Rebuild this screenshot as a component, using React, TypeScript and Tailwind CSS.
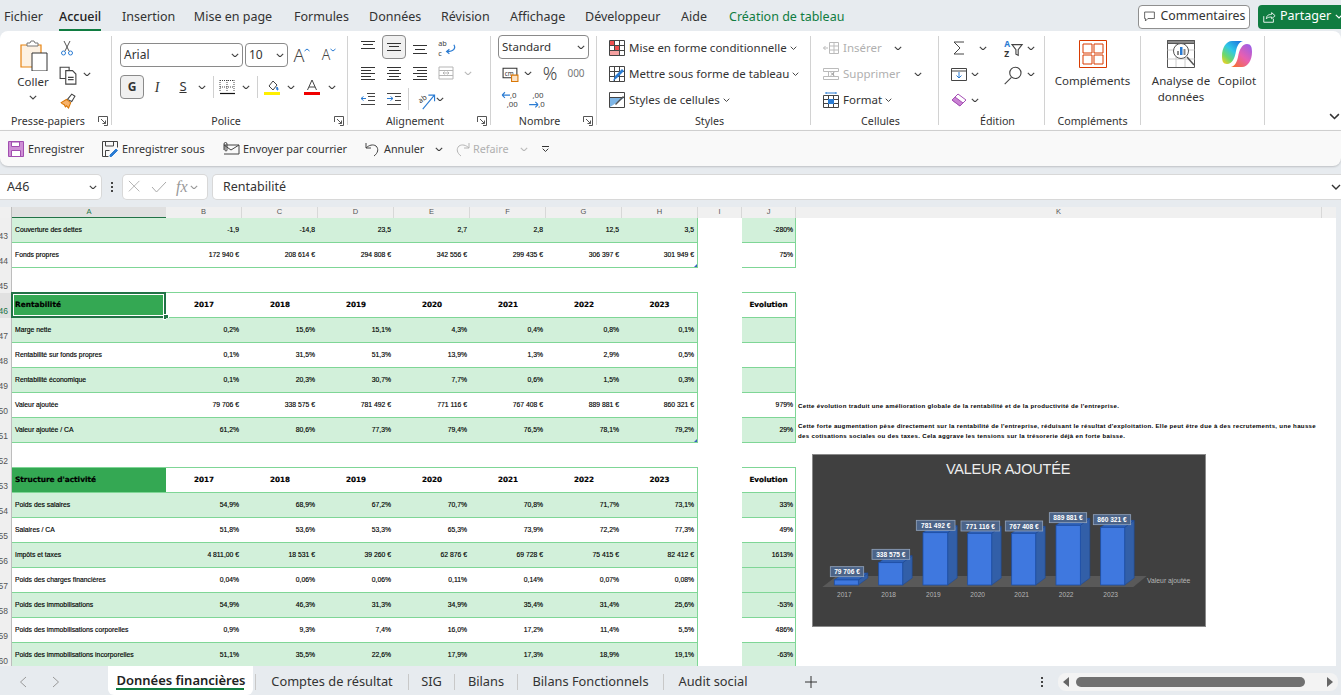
import React from "react";

const gridCols = "grid grid-cols-[12px_154px_76px_76px_76px_76px_76px_76px_76px_44px_54px_526px_14px]";
const ui = "font-['Noto_Sans','Open_Sans',sans-serif]";

const Chev = ({ c = "#444", w = 8 }: { c?: string; w?: number }) => (
  <svg width={w} height={w * 0.6} viewBox="0 0 10 6" className="shrink-0"><path d="M1 1l4 4 4-4" fill="none" stroke={c} strokeWidth="1.4" /></svg>
);
const S = ({ s = 16, children, vb }: { s?: number; children: React.ReactNode; vb?: string }) => (
  <svg width={s} height={s} viewBox={vb ?? "0 0 16 16"} fill="none" stroke="#444" strokeWidth="1" className="shrink-0 overflow-visible">{children}</svg>
);
const Lines = ({ rows, c = "#333" }: { rows: [number, number, number][]; c?: string }) => (
  <S>{rows.map(([y, a, b], i) => <path key={i} d={`M${a} ${y}H${b}`} stroke={c} />)}</S>
);
const Launcher = () => (
  <svg width="10" height="10" viewBox="0 0 10 10" fill="none" stroke="#555" strokeWidth="1" className="shrink-0"><path d="M.5 6V.5H9.5V9.5H6" /><path d="M3 3l4.5 4.5M7.5 4.5v3h-3" /></svg>
);
const Sep = ({ h = "h-[22px]" }: { h?: string }) => <div className={`w-px bg-[#d0d0d0] ${h}`} />;

const Group = ({ cls, label, launcher, children }: { cls: string; label?: string; launcher?: boolean; children: React.ReactNode }) => (
  <div className={`mt-[5px] h-[89px] shrink-0 border-r border-[#d2d2d2] ${cls}`}>
    <div className="flex h-[76px] flex-col">{children}</div>
    <div className="flex h-[18px] items-center text-[10.7px] text-[#333]">
      <span className="flex-1 text-center">{label}</span>
      {launcher && <span className="flex w-[15px] justify-center pr-[2px]"><Launcher /></span>}
    </div>
  </div>
);
const Slot = ({ cls, children }: { cls: string; children?: React.ReactNode }) => (
  <div className={`flex shrink-0 items-center justify-center ${cls}`}>{children}</div>
);
const Row = ({ children, cls = "" }: { children: React.ReactNode; cls?: string }) => (
  <div className={`flex h-[26px] items-center ${cls}`}>{children}</div>
);

const tabs: [string, string][] = [
  ["Fichier", "w-[34px]"], ["Accueil", "w-[42px]"], ["Insertion", "w-[50px]"], ["Mise en page", "w-[80px]"], ["Formules", "w-[54px]"],
  ["Données", "w-[51px]"], ["Révision", "w-[48px]"], ["Affichage", "w-[54px]"], ["Développeur", "w-[74px]"], ["Aide", "w-[28px]"], ["Création de tableau", "w-[115px]"],
];

function TabBar() {
  return (
    <div className="flex h-[31px] shrink-0 items-center pl-[4px] pt-[2px] text-[12.5px] text-[#333]">
      <div className="flex gap-[21px]">
        {tabs.map(([t, w]) => (
          <div key={t} className={`relative whitespace-nowrap leading-[20px] ${w} ${t === "Accueil" ? "text-center font-medium text-[#222]" : "text-center"} ${t.startsWith("Création") ? "text-[#107c41]" : ""}`}>
            {t}
            {t === "Accueil" && <div className="absolute -bottom-[4px] left-0 h-[2px] w-full bg-[#107c41]" />}
          </div>
        ))}
      </div>
      <div className="ml-auto flex items-center">
        <div className="flex h-[24px] w-[112px] items-center justify-center gap-[5px] rounded-[4px] border border-[#8f8f8f] bg-white text-[12.3px]">
          <S s={13}><path d="M2 2.5h12v8H6l-3 3v-3H2z" /></S>Commentaires
        </div>
        <div className="ml-[8px] flex h-[24px] w-[83px] items-center gap-[4px] rounded-l-[4px] bg-[#107c41] pl-[4px] text-[12.5px] text-white">
          <S s={14}><path d="M2 7v7h11v-4M5 10c0-4 3-5 6-5V3l4 3.5L11 10V8c-3 0-5 .5-6 2z" stroke="#fff" /></S>Partager<Chev c="#fff" />
        </div>
      </div>
    </div>
  );
}

function Ribbon() {
  return (
    <div className={`flex h-[99px] shrink-0 rounded-tl-[8px] rounded-tr-[8px] bg-white text-[11.5px] text-[#333] ${ui}`}>
      {/* Presse-papiers */}
      <Group cls="w-[112px]" label="Presse-papiers" launcher>
        <div className="flex">
          <div className="ml-[15px] flex w-[36px] flex-col items-center">
            <svg width="30" height="32" viewBox="0 0 30 32" fill="none" className="mt-[3px]">
              <path d="M3 6h20v22H3z" fill="#fdf1e2" stroke="#e8830f" strokeWidth="1.2" />
              <path d="M9 7V4h3l1-2h3l1 2h3v3z" fill="#fff" stroke="#777" />
              <path d="M14 14h15v18H14z" fill="#fff" stroke="#333" />
            </svg>
            <span className="mt-[3px] text-[11.5px] leading-[16px]">Coller</span>
            <span className="mt-[5px]"><Chev /></span>
          </div>
          <div className="ml-[8px] -mt-[1px] flex flex-col">
            <Row cls="w-[30px]">
              <S s={16}><path d="M5 1l5 10M11 1L6 11" stroke="#555" /><circle cx="4.5" cy="13" r="2" stroke="#2b7cd3" /><circle cx="11.5" cy="13" r="2" stroke="#2b7cd3" /></S>
            </Row>
            <Row cls="w-[40px]">
              <S s={18}><path d="M1 2h8v10H1z" /><path d="M6 5h6l3 3v9H6z" fill="#fff" /><path d="M8 11h5M8 13h5" /></S>
              <span className="ml-[6px]"><Chev /></span>
            </Row>
            <Row cls="w-[30px]">
              <S s={17}><path d="M8 7l4-5 3 2-3 5z" fill="#fff" stroke="#444" /><path d="M2 10l5-3 4 3-2 5-2-2-1 1-1-2-2-1z" fill="#f6b26b" stroke="#d97706" /></S>
            </Row>
          </div>
        </div>
      </Group>

      {/* Police */}
      <Group cls="w-[236px] pl-[8px]" label="Police" launcher>
        <div className="flex flex-col gap-[8px] pt-[7px] text-[12px]">
          <div className="flex h-[24px] items-center">
            <div className="flex h-[24px] w-[123px] items-center justify-between rounded-[4px] border border-[#8a8a8a] pl-[3px] pr-[3px]">Arial<Chev /></div>
            <div className="ml-[2px] flex h-[24px] w-[43px] items-center justify-between rounded-[4px] border border-[#8a8a8a] pl-[3px] pr-[3px]">10<Chev /></div>
            <Slot cls="ml-[1px] w-[26px]">
              <span className="flex items-start text-[18px] font-light leading-[20px] text-[#444]">A<svg width="6" height="4" viewBox="0 0 6 4" className="mt-[3px]"><path d="M.5 3L3 1l2.5 2" fill="none" stroke="#2b7cd3" /></svg></span>
            </Slot>
            <Slot cls="ml-[1px] w-[26px]">
              <span className="flex items-start text-[14px] font-light leading-[18px] text-[#444]">A<svg width="6" height="4" viewBox="0 0 6 4" className="mt-[2px]"><path d="M.5 1L3 3l2.5-2" fill="none" stroke="#2b7cd3" /></svg></span>
            </Slot>
          </div>
          <div className="flex h-[24px] items-center">
            <div className="flex h-[24px] w-[24px] items-center justify-center rounded-[4px] border border-[#8a8a8a] bg-[#f0f0f0] text-[12px] font-bold">G</div>
            <Slot cls="w-[26px] font-['Liberation_Serif',serif] text-[14px] italic">I</Slot>
            <Slot cls="w-[26px] text-[13px] underline">S</Slot>
            <Slot cls="w-[12px]"><Chev /></Slot>
            <div className="ml-[5px]"><Sep /></div>
            <Slot cls="w-[26px]"><S><path d="M1 1.5h14M1 8h14M8 1v12M1 1v12M15 1v12" strokeDasharray="1 1" /><path d="M1 14.5h15" stroke="#111" strokeWidth="1.2" /></S></Slot>
            <Slot cls="w-[12px]"><Chev /></Slot>
            <div className="ml-[5px]"><Sep /></div>
            <Slot cls="w-[28px]"><S><path d="M5 7l4-5 4 4-4 5z" /><path d="M13 8c1 1.5 1.5 3 .5 3s-1-1.5-.5-3z" fill="#2b7cd3" stroke="#2b7cd3" /><path d="M0 14.5h16" stroke="#ffef00" strokeWidth="3" /></S></Slot>
            <Slot cls="w-[10px]"><Chev /></Slot>
            <Slot cls="w-[32px]"><S><path d="M3.5 11L8 1l4.5 10M5 8h6" /><path d="M0 14.5h16" stroke="#f00000" strokeWidth="3" /></S></Slot>
            <Slot cls="w-[8px]"><Chev /></Slot>
          </div>
        </div>
      </Group>

      {/* Alignement */}
      <Group cls="w-[143px] pl-[7px]" label="Alignement" launcher>
        <div className="-mt-[2px]">
          <Row>
            <Slot cls="w-[26px]"><Lines rows={[[2.5, 1, 15], [5.5, 3, 13], [9.5, 1, 15]]} /></Slot>
            <Slot cls="h-[24px] w-[24px] mx-[1px] rounded-[4px] border border-[#8a8a8a] bg-[#f0f0f0]"><Lines rows={[[4.5, 1, 15], [7.5, 3, 13], [11.5, 1, 15]]} /></Slot>
            <Slot cls="w-[26px]"><Lines rows={[[6.5, 1, 15], [10.5, 3, 13], [14.5, 1, 15]]} /></Slot>
            <Slot cls="w-[26px]">
              <S s={18}><text x="1" y="7" fontSize="6.500" fill="#444" stroke="none">ab</text><text x="1" y="16" fontSize="6.500" fill="#444" stroke="none">c</text><path d="M15 6c2 3 0 6-6 6M11 10l-2.500 2 2.500 2" stroke="#2b7cd3" /></S>
            </Slot>
          </Row>
          <Row>
            <Slot cls="w-[26px]"><Lines rows={[[2.5, 1, 15], [5.5, 1, 11], [8.5, 1, 15], [11.5, 1, 11], [14.5, 1, 15]]} /></Slot>
            <Slot cls="w-[26px]"><Lines rows={[[2.5, 1, 15], [5.5, 3, 13], [8.5, 1, 15], [11.5, 3, 13], [14.5, 1, 15]]} /></Slot>
            <Slot cls="w-[26px]"><Lines rows={[[2.5, 1, 15], [5.5, 5, 15], [8.5, 1, 15], [11.5, 5, 15], [14.5, 1, 15]]} /></Slot>
            <Slot cls="w-[26px]"><S><path d="M1 2h14v12H1zM1 5.500h14M1 10.500h14M5 8h6M5 8l1.500-1.500M5 8l1.500 1.500M11 8L9.500 6.500M11 8L9.500 9.500" stroke="#b5b5b5" /></S></Slot>
            <Slot cls="w-[18px]"><Chev c="#bbb" /></Slot>
          </Row>
          <Row>
            <Slot cls="w-[26px]"><S><path d="M7 2.500h8M8 5.500h7M8 9.500h7M1 13.500h14" /><path d="M6 7.500H1M1 7.500l2.500-2M1 7.500l2.500 2" stroke="#2b7cd3" /></S></Slot>
            <Slot cls="w-[26px]"><S><path d="M1 2.500h14M9 5.500h6M9 9.500h6M1 13.500h14" /><path d="M1 7.500h6M7 7.500l-2.500-2M7 7.500l-2.500 2" stroke="#2b7cd3" /></S></Slot>
            <Slot cls="w-[3px]"><Sep /></Slot>
            <Slot cls="w-[29px]"><S s={18}><text x="2" y="10" fontSize="6.500" fill="#444" stroke="none" transform="rotate(-35 6 8)">ab</text><path d="M6 17L16 5M11 4.500h5.500V10" stroke="#2b7cd3" /></S></Slot>
            <Slot cls="w-[2px]"><Chev /></Slot>
          </Row>
        </div>
      </Group>

      {/* Nombre */}
      <Group cls="w-[106px] pl-[7px]" label="Nombre" launcher>
        <div className="-mt-[1px]">
          <div className="flex h-[24px] w-[91px] items-center justify-between rounded-[4px] border border-[#8a8a8a] pl-[3px] pr-[3px]">Standard<Chev /></div>
          <div className="mt-[1px] flex h-[26px] items-center">
            <Slot cls="w-[24px]"><S s={17}><path d="M1 3h13v9H1z" stroke="#333" /><text x="2.500" y="10" fontSize="6" fill="#333" stroke="none">cm</text><path d="M9 9.500h6v6H9z" fill="#fbe3c8" stroke="#d97706" /></S></Slot>
            <Slot cls="w-[12px]"><Chev /></Slot>
            <Slot cls="ml-[2px] w-[28px] text-[18px] font-light leading-[20px] text-[#444]">%</Slot>
            <Slot cls="w-[24px] text-[10px] text-[#777]">000</Slot>
          </div>
          <div className="flex h-[26px] items-center">
            <Slot cls="w-[24px]"><S s={18}><text x="8" y="7" fontSize="7" fill="#444" stroke="none">,0</text><text x="5" y="15" fontSize="7" fill="#444" stroke="none">,00</text><path d="M8 4.500H1M1 4.500l2.500-2.500M1 4.500L3.500 7" stroke="#2b7cd3" /></S></Slot>
            <Slot cls="ml-[3px] w-[24px]"><S s={18}><text x="4" y="7" fontSize="7" fill="#444" stroke="none">,00</text><text x="9" y="15" fontSize="7" fill="#444" stroke="none">,0</text><path d="M1 13h8M9 13l-2.500-2.500M9 13l-2.500 2.500" stroke="#2b7cd3" /></S></Slot>
          </div>
        </div>
      </Group>

      {/* Styles */}
      <Group cls="w-[214px] pl-[12px]" label="Styles">
        <div className="-mt-[1px]">
          {[
            ["Mise en forme conditionnelle", <S key="a"><path d="M.5.500h15v15H.5zM.5 5.500h15M.5 10.500h15M5.500.500v15M10.500.500v15" stroke="#444" /><path d="M1 1h4v4H1zM6 6h4v4H6z" fill="#f05050" stroke="none" /><path d="M1 11h9v4H1z" fill="#f4a0a0" stroke="none" /></S>],
            ["Mettre sous forme de tableau", <S key="b"><path d="M.5.500h15v15H.5zM.5 5.500h15M.5 10.500h15M5.500.500v15M10.500.500v15" stroke="#444" /><path d="M6 10l7-7 2 2-7 7-4 3z" fill="#2b7cd3" stroke="none" /></S>],
            ["Styles de cellules", <S key="c"><path d="M.5.500h15v15H.5zM.5 5.500h15" stroke="#444" /><path d="M1 6h14L1 15z" fill="#7fb6e6" stroke="none" /><path d="M6 12l8-8 1 1-8 8z" fill="#555" stroke="none" /></S>],
          ].map(([t, ic]) => (
            <Row key={t as string}>
              {ic}<span className="ml-[4px] whitespace-nowrap">{t}</span><span className="ml-[3px]"><Chev w={7} /></span>
            </Row>
          ))}
        </div>
      </Group>

      {/* Cellules */}
      <Group cls="w-[128px] pl-[12px]" label="Cellules">
        <div className="-mt-[1px]">
          <Row cls="text-[#b0b0b0]">
            <S><path d="M6.500 2.500h9v11h-9zM6.500 6h9M6.500 10h9M11 2.500v11" stroke="#bbb" /><path d="M5 8H.500M.500 8l2-2M.500 8l2 2" stroke="#bbb" /></S>
            <span className="ml-[4px] w-[43px]">Insérer</span><span className="ml-[8px]"><Chev /></span>
          </Row>
          <Row cls="text-[#b0b0b0]">
            <S><path d="M.5 2.500h15v3H.5zM.5 10.500h15v3H.5zM5.500 5.500v5M10.500 5.500v5" stroke="#bbb" /><path d="M8 6.500l3 3M11 6.500l-3 3" stroke="#999" /></S>
            <span className="ml-[4px] w-[58px]">Supprimer</span><span className="ml-[13px]"><Chev /></span>
          </Row>
          <Row>
            <S><path d="M.5 3.500h15v12H.5zM.5 7.500h15M.5 11.500h15M5.500 3.500v12M10.500 3.500v12" /><path d="M5 7h6v5H5z" fill="#2b7cd3" stroke="none" /><path d="M3 1h10M3 0v2M13 0v2" stroke="#2b7cd3" /></S>
            <span className="ml-[4px]">Format</span><span className="ml-[3px]"><Chev w={7} /></span>
          </Row>
        </div>
      </Group>

      {/* Edition */}
      <Group cls="w-[106px] pl-[12px]" label="Édition">
        <div className="-mt-[1px]">
          <Row>
            <Slot cls="w-[16px]"><S><path d="M13 2H3l6 6-6 6h10" /></S></Slot>
            <Slot cls="ml-[8px] w-[16px]"><Chev /></Slot>
            <Slot cls="ml-[8px] w-[26px]"><S s={18}><text x="1" y="7.500" fontSize="7.500" fontWeight="700" fill="#2b7cd3" stroke="none">A</text><text x="1" y="16" fontSize="7.500" fontWeight="700" fill="#333" stroke="none">Z</text><path d="M8 5h9l-3.500 4.500v5l-2-1v-4z" /></S></Slot>
            <Slot cls="w-[12px]"><Chev /></Slot>
          </Row>
          <Row>
            <Slot cls="w-[16px]"><S><path d="M.5 2.500h15v12H.5zM.5 5h15" /><path d="M8 6v6M8 12l-2.500-2.500M8 12l2.500-2.500" stroke="#2b7cd3" /></S></Slot>
            <Slot cls="w-[16px]"><Chev /></Slot>
            <Slot cls="ml-[16px] w-[26px]"><S s={18}><circle cx="11" cy="7" r="5" /><path d="M7.500 11L1.500 17" /></S></Slot>
            <Slot cls="w-[12px]"><Chev /></Slot>
          </Row>
          <Row>
            <Slot cls="w-[16px]"><S><path d="M1 8l6-6 8 6-6 6z" fill="#fff" stroke="#a64fb5" /><path d="M1 8l3-3 8 6-3 3z" fill="#c983d3" stroke="#a64fb5" /></S></Slot>
            <Slot cls="w-[16px]"><Chev /></Slot>
          </Row>
        </div>
      </Group>

      {/* Compléments */}
      <Group cls="w-[96px]" label="Compléments">
        <div className="flex flex-col items-center pt-[4px]">
          <svg width="28" height="28" viewBox="0 0 28 28" fill="none" stroke="#d83b01" strokeWidth="1"><path d="M.5.500h27v27H.5zM4 4h9v9H4zM15 4h9v9h-9zM4 15h9v9H4zM15 15h9v9h-9z" /></svg>
          <span className="mt-[5px] leading-[16px]">Compléments</span>
        </div>
      </Group>

      {/* Analyse / Copilot */}
      <Group cls="w-[124px]">
        <div className="flex pt-[4px]">
          <div className="ml-[4px] flex w-[72px] flex-col items-center text-center leading-[16px]">
            <svg width="28" height="28" viewBox="0 0 28 28" fill="none" stroke="#555" strokeWidth="1">
              <path d="M.5.500h27v27H.5z" /><path d="M.5.500h27v3H.5z" fill="#8a8a8a" />
              <path d="M.5 10h27M.5 19h27M9 4v23M18 4v23" stroke="#ccc" />
              <circle cx="14" cy="11" r="7.500" fill="#fff" stroke="#555" /><path d="M20 17l7 8" stroke="#555" strokeWidth="1.500" />
              <path d="M10 11h2v4h-2z" fill="#888" stroke="none" /><path d="M13 7h2.500v8H13z" fill="#2b7cd3" stroke="none" /><path d="M16.500 9H18.500v6h-2z" fill="#888" stroke="none" />
            </svg>
            <span className="mt-[5px]">Analyse de<br />données</span>
          </div>
          <div className="flex w-[40px] flex-col items-center">
            <svg width="30" height="28" viewBox="0 0 30 28" fill="none">
              <defs>
                <linearGradient id="cp1" x1=".9" y1="0" x2=".1" y2="1"><stop offset="0" stopColor="#1b6fdc" /><stop offset=".45" stopColor="#2fc8e8" /><stop offset=".75" stopColor="#6fd86a" /><stop offset="1" stopColor="#f4d020" /></linearGradient>
                <linearGradient id="cp2" x1=".9" y1="0" x2=".1" y2="1"><stop offset="0" stopColor="#9a5ee8" /><stop offset=".5" stopColor="#e85fb0" /><stop offset="1" stopColor="#f6702c" /></linearGradient>
              </defs>
              <path d="M10 1h11c-4 1-6 5-7 10-1 7-4 13-9 13-4 0-5-3-5-8C0 8 4 1 10 1z" fill="url(#cp1)" />
              <path d="M20 27H9c4-1 6-5 7-10 1-7 4-13 9-13 4 0 5 3 5 8 0 8-4 15-10 15z" fill="url(#cp2)" />
            </svg>
            <span className="mt-[5px] leading-[16px]">Copilot</span>
          </div>
        </div>
      </Group>
      <div className="ml-auto mr-[1px] mt-[82px]"><Chev c="#333" w={11} /></div>
    </div>
  );
}

function Qat() {
  const item = "flex items-center whitespace-nowrap";
  return (
    <div className="flex h-[36px] shrink-0 items-center rounded-b-[8px] border-t border-[#cfcfcf] bg-[#f9f9f9] pl-[8px] pt-[1px] text-[10.8px] text-[#333] shadow-[0_1px_2px_rgba(0,0,0,0.18)]">
      <div className={`${item} w-[94px] gap-[4px]`}>
        <S><path d="M.5.500h15v15H.5z" fill="#cf8fd6" stroke="#a14eb0" /><path d="M3.500 1h8v4.500h-8z" fill="#fff" stroke="#a14eb0" /><path d="M3.500 15V9.500h9V15" fill="#fff" stroke="#a14eb0" /></S>Enregistrer
      </div>
      <div className={`${item} w-[121px] gap-[4px]`}>
        <S><path d="M.5.500h15v6M.5.500v15h6M3.500 1v4h8V1M3.500 15V9.500h4" /><path d="M8 14l6-6 1.500 1.500-6 6H8z" fill="#2b7cd3" stroke="#2b7cd3" /></S>Enregistrer sous
      </div>
      <div className={`${item} w-[142px] gap-[4px]`}>
        <S><path d="M1 4h15v9H1M1 4l7 5 8-5" /><path d="M1 9V3a1.500 1.500 0 0 1 3 0v6a1 1 0 0 1-2 0V4" /></S>Envoyer par courrier
      </div>
      <div className={`${item} w-[89px] gap-[3px]`}>
        <S><path d="M1 2v5h5M1 7c3-3 7-4 10-2 3 3 2 7-2 10" /></S>Annuler<span className="ml-[8px]"><Chev /></span>
      </div>
      <div className={`${item} gap-[3px] text-[#b0b0b0]`}>
        <S><path d="M15 2v5h-5M15 7c-3-3-7-4-10-2-3 3-2 7 2 10" stroke="#b5b5b5" /></S>Refaire<span className="ml-[8px]"><Chev c="#bbb" /></span>
      </div>
      <div className="ml-[14px] flex flex-col items-center gap-[1px]"><div className="h-px w-[7px] bg-[#333]" /><Chev c="#333" w={7} /></div>
    </div>
  );
}

function FormulaBar() {
  return (
    <div className="mt-[9px] flex h-[24px] shrink-0 items-center text-[12.5px] text-[#333]">
      <div className="flex h-[24px] w-[101px] items-center justify-between rounded-r-[4px] bg-white pl-[7px] pr-[4px] shadow-[0_0_0_1px_#d8d8d8]">A46<Chev /></div>
      <div className="flex w-[22px] flex-col items-center gap-[2px]">
        <div className="h-[2px] w-[2px] bg-[#444]" /><div className="h-[2px] w-[2px] bg-[#444]" /><div className="h-[2px] w-[2px] bg-[#444]" />
      </div>
      <div className="flex h-[24px] w-[84px] items-center gap-[9px] rounded-[4px] bg-white pl-[5px] shadow-[0_0_0_1px_#d8d8d8]">
        <S s={14}><path d="M1 1l12 12M13 1L1 13" stroke="#aaa" /></S>
        <S s={16}><path d="M1 8l4.500 5L15 3" stroke="#aaa" /></S>
        <span className="flex items-center gap-[2px] font-['Liberation_Serif',serif] text-[16px] italic text-[#999]">fx<Chev c="#999" /></span>
      </div>
      <div className="ml-[6px] flex h-[24px] flex-1 items-center justify-between rounded-l-[4px] bg-white pl-[10px] shadow-[0_0_0_1px_#d8d8d8]">Rentabilité<Chev c="#333" w={10} /></div>
    </div>
  );
}

type Tint = "g" | "w";
type Data = { n: number; label?: string; v?: string[]; j?: string; t?: Tint; jt?: Tint; head?: boolean; sel?: boolean; blank?: boolean; note?: React.ReactNode; corner?: boolean };
const years = ["2017", "2018", "2019", "2020", "2021", "2022", "2023"];
const rows: Data[] = [
  { n: 43, label: "Couverture des dettes", v: ["-1,9", "-14,8", "23,5", "2,7", "2,8", "12,5", "3,5"], j: "-280%", t: "g", jt: "g" },
  { n: 44, label: "Fonds propres", v: ["172 940 €", "208 614 €", "294 808 €", "342 556 €", "299 435 €", "306 397 €", "301 949 €"], j: "75%", t: "w", jt: "w", corner: true },
  { n: 45, blank: true },
  { n: 46, label: "Rentabilité", head: true, sel: true },
  { n: 47, label: "Marge nette", v: ["0,2%", "15,6%", "15,1%", "4,3%", "0,4%", "0,8%", "0,1%"], t: "g", jt: "g" },
  { n: 48, label: "Rentabilité sur fonds propres", v: ["0,1%", "31,5%", "51,3%", "13,9%", "1,3%", "2,9%", "0,5%"], t: "w", jt: "w" },
  { n: 49, label: "Rentabilité économique", v: ["0,1%", "20,3%", "30,7%", "7,7%", "0,6%", "1,5%", "0,3%"], t: "g", jt: "g" },
  { n: 50, label: "Valeur ajoutée", v: ["79 706 €", "338 575 €", "781 492 €", "771 116 €", "767 408 €", "889 881 €", "860 321 €"], j: "979%", t: "w", jt: "w", note: "Cette évolution traduit une amélioration globale de la rentabilité et de la productivité de l'entreprise." },
  { n: 51, label: "Valeur ajoutée / CA", v: ["61,2%", "80,6%", "77,3%", "79,4%", "76,5%", "78,1%", "79,2%"], j: "29%", t: "g", jt: "g", corner: true, note: <>Cette forte augmentation pèse directement sur la rentabilité de l'entreprise, réduisant le résultat d'exploitation. Elle peut être due à des recrutements, une hausse<br />des cotisations sociales ou des taxes. Cela aggrave les tensions sur la trésorerie déjà en forte baisse.</> },
  { n: 52, blank: true },
  { n: 53, label: "Structure d'activité", head: true },
  { n: 54, label: "Poids des salaires", v: ["54,9%", "68,9%", "67,2%", "70,7%", "70,8%", "71,7%", "73,1%"], j: "33%", t: "g", jt: "g" },
  { n: 55, label: "Salaires / CA", v: ["51,8%", "53,6%", "53,3%", "65,3%", "73,9%", "72,2%", "77,3%"], j: "49%", t: "w", jt: "w" },
  { n: 56, label: "Impôts et taxes", v: ["4 811,00 €", "18 531 €", "39 260 €", "62 876 €", "69 728 €", "75 415 €", "82 412 €"], j: "1613%", t: "g", jt: "g" },
  { n: 57, label: "Poids des charges financières", v: ["0,04%", "0,06%", "0,06%", "0,11%", "0,14%", "0,07%", "0,08%"], t: "w", jt: "g" },
  { n: 58, label: "Poids des immobilisations", v: ["54,9%", "46,3%", "31,3%", "34,9%", "35,4%", "31,4%", "25,6%"], j: "-53%", t: "g", jt: "g" },
  { n: 59, label: "Poids des immobilisations corporelles", v: ["0,9%", "9,3%", "7,4%", "16,0%", "17,2%", "11,4%", "5,5%"], j: "486%", t: "w", jt: "w" },
  { n: 60, label: "Poids des immobilisations incorporelles", v: ["51,1%", "35,5%", "22,6%", "17,9%", "17,3%", "18,9%", "19,1%"], j: "-63%", t: "g", jt: "g" },
];

const cellBase = "flex h-[25px] items-center border-b border-[#7fd696] overflow-hidden whitespace-nowrap";
const bodyFont = "font-['Liberation_Sans',sans-serif] text-[6.8px] text-black [-webkit-text-stroke:0.15px_#000]";
const headFont = "font-['DejaVu_Sans',sans-serif] text-[7.2px] font-bold text-black [-webkit-text-stroke:0.2px_#000]";

function SheetRow({ r }: { r: Data }) {
  const bg = r.t === "g" ? "bg-[#d2f0da]" : "bg-white";
  const jbg = r.jt === "g" ? "bg-[#d2f0da]" : "bg-white";
  return (
    <div className={`${gridCols} h-[25px]`}>
      <div className={`flex h-[25px] items-end justify-end overflow-hidden border-r border-[#bdbdbd] pr-[3px] font-['Liberation_Sans',sans-serif] text-[8.5px] leading-[14px] ${r.sel ? "bg-[#e1e1e1] text-[#217346]" : "bg-[#efefef] text-[#555]"}`}>{r.n}</div>
      {r.blank ? (
        <>
          <div className={`${cellBase} col-span-8 bg-white`} />
          <div className="bg-white" />
          <div className={`${cellBase} bg-white`} />
          <div className="bg-white" />
          <div className="bg-white" />
        </>
      ) : r.head ? (
        <>
          <div className={`${cellBase} ${headFont} relative bg-[#34a853] pl-[3px] text-[7.4px] ${r.sel ? "overflow-visible" : ""}`}>
            {r.label}
            {r.sel && <div className="absolute -left-[1px] -top-[1px] h-[26px] w-[155px] border-2 border-[#217346] shadow-[inset_0_0_0_1px_#fff]" />}
            {r.sel && <div className="absolute -bottom-[3px] -right-[3px] h-[6px] w-[6px] border border-white bg-[#217346]" />}
          </div>
          {years.map((y, i) => <div key={y} className={`${cellBase} ${headFont} justify-center bg-white ${i === 6 ? "border-r" : ""}`}>{y}</div>)}
          <div className="bg-white" />
          <div className={`${cellBase} ${headFont} justify-center border-r bg-white text-[6.8px]`}>Evolution</div>
          <div className="bg-white" />
          <div className="bg-white" />
        </>
      ) : (
        <>
          <div className={`${cellBase} ${bodyFont} ${bg} pl-[3px]`}>{r.label}</div>
          {r.v!.map((x, i) => (
            <div key={i} className={`${cellBase} ${bodyFont} ${bg} relative justify-end pr-[3px] ${i === 6 ? "border-r" : ""}`}>
              {x}
              {i === 6 && r.corner && <div className="absolute bottom-0 right-0 h-[3px] w-[3px] bg-[#3b5fc0] [clip-path:polygon(100%_0,100%_100%,0_100%)]" />}
            </div>
          ))}
          <div className="bg-white" />
          <div className={`${cellBase} ${bodyFont} ${jbg} justify-end border-r pr-[2px]`}>{r.j}</div>
          <div className="flex h-[25px] items-center overflow-visible whitespace-nowrap bg-white pl-[2px] font-['Liberation_Sans',sans-serif] text-[6.1px] font-bold leading-[10px] tracking-[0.31px] text-black">
            {r.note && <div>{r.note}</div>}
          </div>
          <div className="bg-white" />
        </>
      )}
    </div>
  );
}

function Chart() {
  const z = (v: number) => v / 3 - 7;
  const y = (v: number) => v / 3 - 4;
  const data = [
    { yr: "2017", x: 88, w: 72, top: 390, lb: [76, 100, 350], t: "79 706 €" },
    { yr: "2018", x: 221, w: 72, top: 338, lb: [201, 113, 298], t: "338 575 €" },
    { yr: "2019", x: 354, w: 74, top: 248, lb: [334, 116, 211], t: "781 492 €" },
    { yr: "2020", x: 488, w: 72, top: 250, lb: [468, 116, 213], t: "771 116 €" },
    { yr: "2021", x: 620, w: 72, top: 250, lb: [601, 112, 213], t: "767 408 €" },
    { yr: "2022", x: 753, w: 73, top: 226, lb: [733, 112, 188], t: "889 881 €" },
    { yr: "2023", x: 887, w: 72, top: 232, lb: [865, 112, 194], t: "860 321 €" },
  ];
  const base = 405;
  return (
    <div className="absolute left-[812px] top-[247px] h-[173px] w-[394px] border border-[#8a8a8a] bg-[#404040]">
      <svg width="392" height="171" viewBox="1 1 392 171" className="block font-['Liberation_Sans',sans-serif]">
        <text x="196" y="20" textAnchor="middle" fontSize="14.500" fill="#ededed" letterSpacing="-0.2">VALEUR AJOUTÉE</text>
        <polygon points={`${z(52)},${y(411)} ${z(95)},${y(378)} ${z(1025)},${y(378)} ${z(985)},${y(411)}`} fill="#595959" />
        {data.map((d) => {
          const dx = 9.5, dy = 7;
          const L = z(d.x), R = z(d.x + d.w), T = y(d.top), B = y(base);
          return (
            <g key={d.yr}>
              <polygon points={`${R},${T} ${R + dx},${T - dy} ${R + dx},${B - dy} ${R},${B}`} fill="#325fa8" stroke="#1f4a96" strokeWidth=".6" />
              <polygon points={`${L},${T} ${L + dx},${T - dy} ${R + dx},${T - dy} ${R},${T}`} fill="#2f62b8" stroke="#1f4a96" strokeWidth=".6" />
              <rect x={L} y={T} width={R - L} height={B - T} fill="#3f78df" stroke="#1d4fa8" strokeWidth=".8" />
              <rect x={z(d.lb[0])} y={y(d.lb[2])} width={d.lb[1] / 3} height="10" fill="#4c6488" stroke="#93a4bd" strokeWidth=".8" />
              <text x={z(d.lb[0]) + d.lb[1] / 6} y={y(d.lb[2]) + 7.500} textAnchor="middle" fontSize="6.600" fontWeight="700" fill="#fff">{d.t}</text>
              <text x={z(d.x + d.w / 2 - 6)} y={y(442)} textAnchor="middle" fontSize="6.600" fill="#b5b5b5">{d.yr}</text>
            </g>
          );
        })}
        <text x={z(1026)} y={y(400)} fontSize="6.800" fill="#b5b5b5">Valeur ajoutée</text>
      </svg>
    </div>
  );
}

function Sheet() {
  const heads = ["A", "B", "C", "D", "E", "F", "G", "H", "I", "J", "K"];
  return (
    <div className="relative mt-[8px] h-[459px] w-[1336px] shrink-0 overflow-hidden bg-white">
      <div className={`${gridCols} h-[11px] bg-[#f0f0f0] font-['Liberation_Sans',sans-serif] text-[7.5px] leading-[10px] text-[#555]`}>
        <div className="border-b border-r border-[#bdbdbd]" />
        {heads.map((h) => (
          <div key={h} className={`text-center ${h === "A" ? "border-b-2 border-[#217346] bg-[#e0e0e0] text-[#217346]" : "border-b border-r border-[#bdbdbd] border-r-[#d8d8d8]"}`}>{h}</div>
        ))}
        <div className="border-b border-[#bdbdbd]" />
      </div>
      {rows.map((r) => <SheetRow key={r.n} r={r} />)}
      <Chart />
    </div>
  );
}

function SheetTabs() {
  const others: [string, string][] = [
    ["Comptes de résultat", "w-[153px]"], ["SIG", "w-[46px]"], ["Bilans", "w-[63px]"], ["Bilans Fonctionnels", "w-[146px]"], ["Audit social", "w-[99px]"],
  ];
  return (
    <div className="flex h-[29px] shrink-0 items-center text-[12.8px] text-[#333]">
      <div className="flex w-[108px] items-center pl-[19px] pt-[3px]">
        <svg width="8" height="12" viewBox="0 0 8 12" fill="none" stroke="#999" strokeWidth="1"><path d="M7 1L1.500 6 7 11" /></svg>
        <svg width="8" height="12" viewBox="0 0 8 12" fill="none" stroke="#999" strokeWidth="1" className="ml-[25px]"><path d="M1 1l5.500 5L1 11" /></svg>
      </div>
      <div className="relative flex h-[29px] w-[145px] items-start justify-center rounded-b-[6px] bg-white pl-[1px] pt-[5px] text-[13px] font-semibold leading-[18px] text-[#222]">
        Données financières
        <div className="absolute bottom-[5px] left-[8px] h-[2px] w-[128px] bg-[#107c41]" />
      </div>
      <div className="ml-[2px] mt-[3px] flex items-center">
        {others.map(([t, w]) => (
          <div key={t} className={`flex h-[16px] items-center justify-center whitespace-nowrap border-l border-[#c8c8c8] ${w}`}>{t}</div>
        ))}
      </div>
      <div className="ml-[43px] mt-[3px] w-[12px]"><svg width="12" height="12" viewBox="0 0 12 12" stroke="#333" strokeWidth="1"><path d="M6 0v12M0 6h12" /></svg></div>
      <div className="ml-[224px] mt-[3px] flex flex-col gap-[2px]">
        <div className="h-[2px] w-[2px] bg-[#444]" /><div className="h-[2px] w-[2px] bg-[#444]" /><div className="h-[2px] w-[2px] bg-[#444]" />
      </div>
      <div className="ml-[15px] mt-[3px] flex h-[18px] w-[280px] items-center rounded-[8px] bg-[#f3f3f3] px-[5px]">
        <span className="h-0 w-0 border-y-[5px] border-r-[6px] border-y-transparent border-r-[#666]" />
        <div className="ml-[7px] h-[10px] w-[229px] rounded-[5px] bg-[#707070]" />
        <span className="ml-auto h-0 w-0 border-y-[5px] border-l-[6px] border-y-transparent border-l-[#666]" />
      </div>
    </div>
  );
}

export default function App() {
  return (
    <div className={`flex h-[695px] w-[1341px] flex-col overflow-hidden bg-[#e7ebef] ${ui}`}>
      <TabBar />
      <Ribbon />
      <Qat />
      <FormulaBar />
      <Sheet />
      <SheetTabs />
    </div>
  );
}
